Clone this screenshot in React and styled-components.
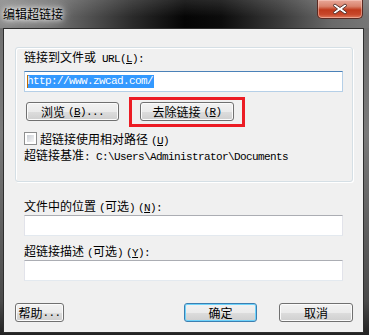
import React from 'react'
import styled, { createGlobalStyle } from 'styled-components'

const GlobalStyle = createGlobalStyle`
  html, body {
    margin: 0;
    padding: 0;
    background: #000;
  }
  body {
    font-family: "Noto Sans CJK SC", "Liberation Sans", sans-serif;
    font-size: 12px;
    color: #000;
  }
`

const Window = styled.div`
  width: 369px;
  height: 335px;
  box-sizing: border-box;
  display: flex;
  flex-direction: column;
  padding-bottom: 2px;
  background: linear-gradient(180deg, #6e6e6e 0%, #7a7a7a 40%, #4a4a4a 90%, #222 100%);
  overflow: hidden;
`

const TitleBar = styled.div`
  height: 28px;
  flex: none;
  display: flex;
  justify-content: space-between;
  align-items: flex-start;
  background:
    linear-gradient(180deg, rgba(255,255,255,0.12) 0%, rgba(255,255,255,0) 60%),
    linear-gradient(90deg, #8a8a8a 0%, #727272 14%, #2a2a2a 36%, #050505 50%, #0c0c0c 60%, #3a3a3a 76%, #6a6a6a 90%, #767676 100%);
`

const Title = styled.div`
  margin: 6px 0 0 3px;
  line-height: 16px;
  font-size: 12px;
  color: #000;
  text-shadow: 0 0 4px #fff, 0 0 8px rgba(255, 255, 255, 0.9), 0 0 12px rgba(255, 255, 255, 0.7);
`

const CloseButton = styled.div`
  width: 46px;
  height: 19px;
  margin-right: 6px;
  box-sizing: border-box;
  border: 1px solid #5a2a22;
  border-top: none;
  border-radius: 0 0 5px 5px;
  background: linear-gradient(180deg, #e9a899 0%, #d9836d 35%, #c03a1c 55%, #c8472a 80%, #e07a5c 100%);
  box-shadow: inset 0 0 0 1px rgba(255, 220, 210, 0.45);
  display: flex;
  align-items: center;
  justify-content: center;
`

const Client = styled.div`
  flex: 1;
  margin: 0 5px 0 3px;
  border: 1px solid #2e2e2e;
  background: #f0f0f0;
  display: flex;
  flex-direction: column;
`

const GroupBox = styled.div`
  margin: 18px 10px 0 11px;
  padding: 2px 9px 19px 8px;
  border: 1px solid #d5dfe5;
  border-radius: 3px;
  box-shadow: inset 1px 1px 0 #fff, 1px 1px 0 #fff;
  display: flex;
  flex-direction: column;
`

const Label = styled.div`
  line-height: 14px;
  height: 14px;
  margin-top: ${p => p.$top || 0}px;
  white-space: nowrap;
`

const Latin = styled.span`
  font-family: "Liberation Mono", "DejaVu Sans Mono", monospace;
  font-size: 11px;
  letter-spacing: -0.6px;
  margin-left: ${p => p.$gap || 0}px;
`

const TextField = styled.div`
  height: 21px;
  box-sizing: border-box;
  margin-top: ${p => p.$top || 0}px;
  border: 1px solid;
  border-color: ${p => p.$focused
    ? '#4a81b8 #b5cfe7 #b5cfe7 #b5cfe7'
    : '#abadb3 #e2e3ea #e3e9ef #e2e3ea'};
  background: #fff;
  padding: 3px 2px 0;
  display: flex;
  align-items: flex-start;
`

const Selection = styled.span`
  position: relative;
  background: #3399ff;
  color: #fff;
  height: 13px;
  line-height: 13px;
  font-family: "Liberation Mono", "DejaVu Sans Mono", monospace;
  font-size: 11px;
  letter-spacing: -0.6px;
  padding-right: 1px;
`

const Caret = styled.span`
  position: absolute;
  left: 0;
  top: 0;
  width: 1px;
  height: 13px;
  background: #c46a00;
`

const ButtonRow = styled.div`
  display: flex;
  gap: ${p => p.$gap || 0}px;
  margin-top: ${p => p.$top || 0}px;
  margin-left: ${p => p.$left || 0}px;
`

const Button = styled.div`
  position: relative;
  width: ${p => p.$w}px;
  height: 19px;
  box-sizing: border-box;
  border: 1px solid ${p => (p.$default ? '#3c7fb1' : '#707070')};
  border-radius: 3px;
  background: linear-gradient(180deg, #f2f2f2 0%, #ebebeb 50%, #dddddd 51%, #cfcfcf 100%);
  box-shadow: inset 0 0 0 1px ${p => (p.$default ? '#6fd3fb' : '#fbfbfb')};
  display: flex;
  align-items: center;
  justify-content: center;
  line-height: 14px;
  white-space: nowrap;
`

const Highlight = styled.div`
  position: absolute;
  left: -12px;
  right: -12px;
  top: -6px;
  bottom: -7px;
  border: 3px solid #ec1c24;
  pointer-events: none;
`

const CheckRow = styled.div`
  display: flex;
  align-items: center;
  gap: 3px;
  margin-top: 10px;
  height: 14px;
`

const CheckBox = styled.div`
  width: 13px;
  height: 13px;
  box-sizing: border-box;
  border: 1px solid #8e8f8f;
  background: #fff;
  padding: 2px;
  &::after {
    content: '';
    display: block;
    width: 100%;
    height: 100%;
    background: linear-gradient(135deg, #cbcfd5 0%, #f6f6f6 100%);
  }
`

const Lower = styled.div`
  padding: 0 20px;
  display: flex;
  flex-direction: column;
`

const Footer = styled.div`
  display: flex;
  align-items: center;
  margin-top: 22px;
  padding: 0 10px 0 11px;
`

const Spacer = styled.div`
  flex: 1;
`

const CloseGlyph = () => (
  <svg width="16" height="12" viewBox="0 0 16 12">
    <path
      d="M3 1 L8 4.5 L13 1 L15 2.5 L10.5 6 L15 9.5 L13 11 L8 7.5 L3 11 L1 9.5 L5.5 6 L1 2.5 Z"
      fill="#fff"
      stroke="#4a2a26"
      strokeWidth="0.9"
      strokeLinejoin="round"
    />
  </svg>
)

export default function App() {
  return (
    <>
      <GlobalStyle />
      <Window>
        <TitleBar>
          <Title>编辑超链接</Title>
          <CloseButton>
            <CloseGlyph />
          </CloseButton>
        </TitleBar>
        <Client>
          <GroupBox>
            <Label>链接到文件或<Latin $gap={6}>URL(<u>L</u>):</Latin></Label>
            <TextField $top={7} $focused>
              <Selection>
                <Caret />
                http://www.zwcad.com/
              </Selection>
            </TextField>
            <ButtonRow $top={10} $left={2} $gap={21}>
              <Button $w={93}>浏览<Latin $gap={3}>(<u>B</u>)...</Latin></Button>
              <Button $w={94}>
                去除链接<Latin $gap={3}>(<u>R</u>)</Latin>
                <Highlight />
              </Button>
            </ButtonRow>
            <CheckRow>
              <CheckBox />
              <span>超链接使用相对路径<Latin $gap={3}>(<u>U</u>)</Latin></span>
            </CheckRow>
            <Label $top={3}>
              超链接基准<Latin>: C:\Users\Administrator\Documents</Latin>
            </Label>
          </GroupBox>
          <Lower>
            <Label $top={17}>文件中的位置<Latin $gap={3}>(</Latin>可选<Latin>)</Latin><Latin $gap={3}>(<u>N</u>):</Latin></Label>
            <TextField $top={2} />
            <Label $top={8}>超链接描述<Latin $gap={3}>(</Latin>可选<Latin>)</Latin><Latin $gap={3}>(<u>Y</u>):</Latin></Label>
            <TextField $top={2} />
          </Lower>
          <Footer>
            <Button $w={49}>帮助<Latin>...</Latin></Button>
            <Spacer />
            <ButtonRow $gap={22}>
              <Button $w={73} $default>确定</Button>
              <Button $w={74}>取消</Button>
            </ButtonRow>
          </Footer>
        </Client>
      </Window>
    </>
  )
}
